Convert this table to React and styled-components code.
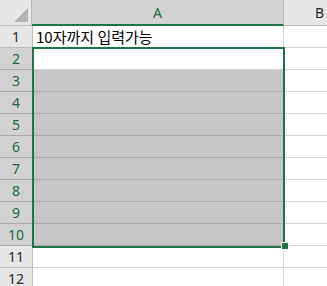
import styled, { createGlobalStyle } from "styled-components";

const GlobalStyle = createGlobalStyle`
    html, body {
        margin: 0;
        padding: 0;
        background: #ffffff;
        overflow: hidden;
    }
`;

const GREEN = "#217346";

const Sheet = styled.div`
    position: relative;
    width: 100%;
    height: 100vh;
    overflow: hidden;
    font-family: "Noto Sans", "Liberation Sans", sans-serif;
`;

const Row = styled.div`
    display: flex;
    height: ${(p) => p.$height}px;
`;

const Corner = styled.div`
    position: relative;
    width: 32px;
    flex: none;
    box-sizing: border-box;
    background: #e6e6e6;
    border-right: 1px solid #bdbdbd;
    border-bottom: 1px solid #bdbdbd;

    &::after {
        content: "";
        position: absolute;
        right: 3px;
        bottom: 3px;
        width: 0;
        height: 0;
        border-left: 14px solid transparent;
        border-bottom: 14px solid #b4b4b4;
    }
`;

const ColHead = styled.div`
    width: ${(p) => p.$width}px;
    flex: none;
    box-sizing: border-box;
    display: flex;
    align-items: center;
    justify-content: center;
    font-size: 14px;
    background: ${(p) => (p.$active ? "#d2d2d2" : "#e6e6e6")};
    color: ${(p) => (p.$active ? "#1e6b41" : "#262626")};
    border-right: 1px solid #bdbdbd;
    border-bottom: ${(p) => (p.$active ? `2px solid ${GREEN}` : "1px solid #bdbdbd")};
    padding-top: ${(p) => (p.$active ? "1px" : "0")};
`;

const RowHead = styled.div`
    width: 33px;
    flex: none;
    box-sizing: border-box;
    display: flex;
    align-items: center;
    justify-content: center;
    font-size: 14px;
    background: ${(p) => (p.$active ? "#d2d2d2" : "#e6e6e6")};
    color: ${(p) => (p.$active ? "#1e6b41" : "#262626")};
    border-right: 1px solid ${(p) => (p.$active ? GREEN : "#bdbdbd")};
    border-bottom: 1px solid ${(p) => (p.$active ? "#ababab" : "#bdbdbd")};
`;

const Cell = styled.div`
    width: ${(p) => p.$width}px;
    flex: none;
    box-sizing: border-box;
    display: flex;
    align-items: center;
    padding-left: 3px;
    font-family: "Noto Sans CJK KR", "Noto Sans", sans-serif;
    font-size: 15px;
    color: #000000;
    white-space: nowrap;
    background: ${(p) => (p.$selected ? "#c6c6c6" : "#ffffff")};
    border-right: 1px solid ${(p) => (p.$selected ? "#ababab" : "#d4d4d4")};
    border-bottom: 1px solid ${(p) => (p.$selected ? "#ababab" : "#d4d4d4")};
`;

const Selection = styled.div`
    position: absolute;
    left: 32px;
    top: 47px;
    width: 253px;
    height: 201px;
    box-sizing: border-box;
    border: 2px solid ${GREEN};
    pointer-events: none;
`;

const FillHandle = styled.div`
    position: absolute;
    left: 281px;
    top: 242px;
    width: 6px;
    height: 6px;
    background: ${GREEN};
    border: 1px solid #ffffff;
`;

const COL_A = 252;
const COL_B = 72;
const rows = Array.from({ length: 12 }, (_, i) => i + 1);

const App = () => (
    <>
        <GlobalStyle />
        <Sheet>
            <Row $height={26}>
                <Corner />
                <ColHead $width={COL_A} $active>
                    A
                </ColHead>
                <ColHead $width={COL_B}>B</ColHead>
            </Row>

            {rows.map((n) => {
                const inRange = n >= 2 && n <= 10;
                const shaded = n >= 3 && n <= 10;
                return (
                    <Row key={n} $height={22}>
                        <RowHead $active={inRange}>{n}</RowHead>
                        <Cell $width={COL_A - 1} $selected={shaded}>
                            {n === 1 ? "10자까지 입력가능" : ""}
                        </Cell>
                        <Cell $width={COL_B} />
                    </Row>
                );
            })}

            <Selection />
            <FillHandle />
        </Sheet>
    </>
);

export default App;
